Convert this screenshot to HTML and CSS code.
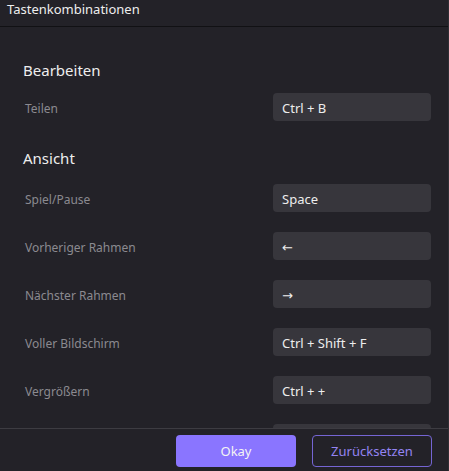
FILE: index.html
```html
<!DOCTYPE html>
<html lang="de">
<head>
<meta charset="utf-8">
<title>Tastenkombinationen</title>
<link rel="stylesheet" href="styles.css">
</head>
<body>
<div class="dialog">
  <header class="dialog-header">Tastenkombinationen</header>
  <main class="dialog-body">
    <section class="section">
      <h2 class="section-title">Bearbeiten</h2>
      <div class="row">
        <span class="label">Teilen</span>
        <span class="key">Ctrl + B</span>
      </div>
    </section>
    <section class="section section-view">
      <h2 class="section-title">Ansicht</h2>
      <div class="row">
        <span class="label">Spiel/Pause</span>
        <span class="key">Space</span>
      </div>
      <div class="row">
        <span class="label">Vorheriger Rahmen</span>
        <span class="key">←</span>
      </div>
      <div class="row">
        <span class="label">Nächster Rahmen</span>
        <span class="key">→</span>
      </div>
      <div class="row">
        <span class="label">Voller Bildschirm</span>
        <span class="key">Ctrl + Shift + F</span>
      </div>
      <div class="row">
        <span class="label">Vergrößern</span>
        <span class="key">Ctrl + +</span>
      </div>
      <div class="row">
        <span class="label"></span>
        <span class="key"></span>
      </div>
    </section>
  </main>
  <footer class="dialog-footer">
    <button class="btn btn-primary">Okay</button>
    <button class="btn btn-outline">Zurücksetzen</button>
  </footer>
</div>
</body>
</html>
```
FILE: styles.css
```css
html, body {
  margin: 0;
  padding: 0;
  height: 100%;
  background: #232228;
}

body {
  font-family: "Noto Sans", "DejaVu Sans", sans-serif;
  color: #e6e6e6;
  overflow: hidden;
}

.dialog {
  display: flex;
  flex-direction: column;
  height: 471px;
  box-sizing: border-box;
  border-right: 1px solid #2f2e34;
}

.dialog-header {
  box-sizing: border-box;
  height: 27px;
  flex: none;
  padding-left: 7px;
  font-size: 13px;
  line-height: 19px;
  color: #eeeeee;
  border-bottom: 1px solid #111114;
}

.dialog-body {
  flex: 1;
  overflow: hidden;
  padding: 32px 17px 0 23px;
}

.section-title {
  margin: 0 0 12px;
  font-size: 15px;
  font-weight: normal;
  line-height: 22px;
  color: #eeeeee;
}

.section-view {
  margin-top: 26px;
}

.section-view .section-title {
  margin-bottom: 15px;
}

.row {
  display: flex;
  align-items: flex-start;
  justify-content: space-between;
  height: 28px;
}

.row + .row {
  margin-top: 20px;
}

.label {
  padding-left: 2px;
  font-size: 12px;
  line-height: 31px;
  color: #8b8a90;
}

.key {
  box-sizing: border-box;
  width: 158px;
  height: 28px;
  padding-left: 9px;
  border-radius: 4px;
  background: #37363c;
  font-size: 13px;
  line-height: 31px;
  color: #ededed;
}

.dialog-footer {
  flex: none;
  display: flex;
  justify-content: flex-end;
  gap: 16px;
  height: 43px;
  box-sizing: border-box;
  padding: 6px 16px 0 0;
  border-top: 1px solid #3d3c42;
}

.btn {
  box-sizing: border-box;
  width: 120px;
  height: 32px;
  border-radius: 4px;
  font-family: "Noto Sans", "DejaVu Sans", sans-serif;
  font-size: 13px;
  cursor: pointer;
}

.btn-primary {
  border: none;
  background: #8a75ff;
  color: #f4f4f4;
}

.btn-outline {
  border: 1px solid #7565d4;
  background: transparent;
  color: #9484f2;
}
```
